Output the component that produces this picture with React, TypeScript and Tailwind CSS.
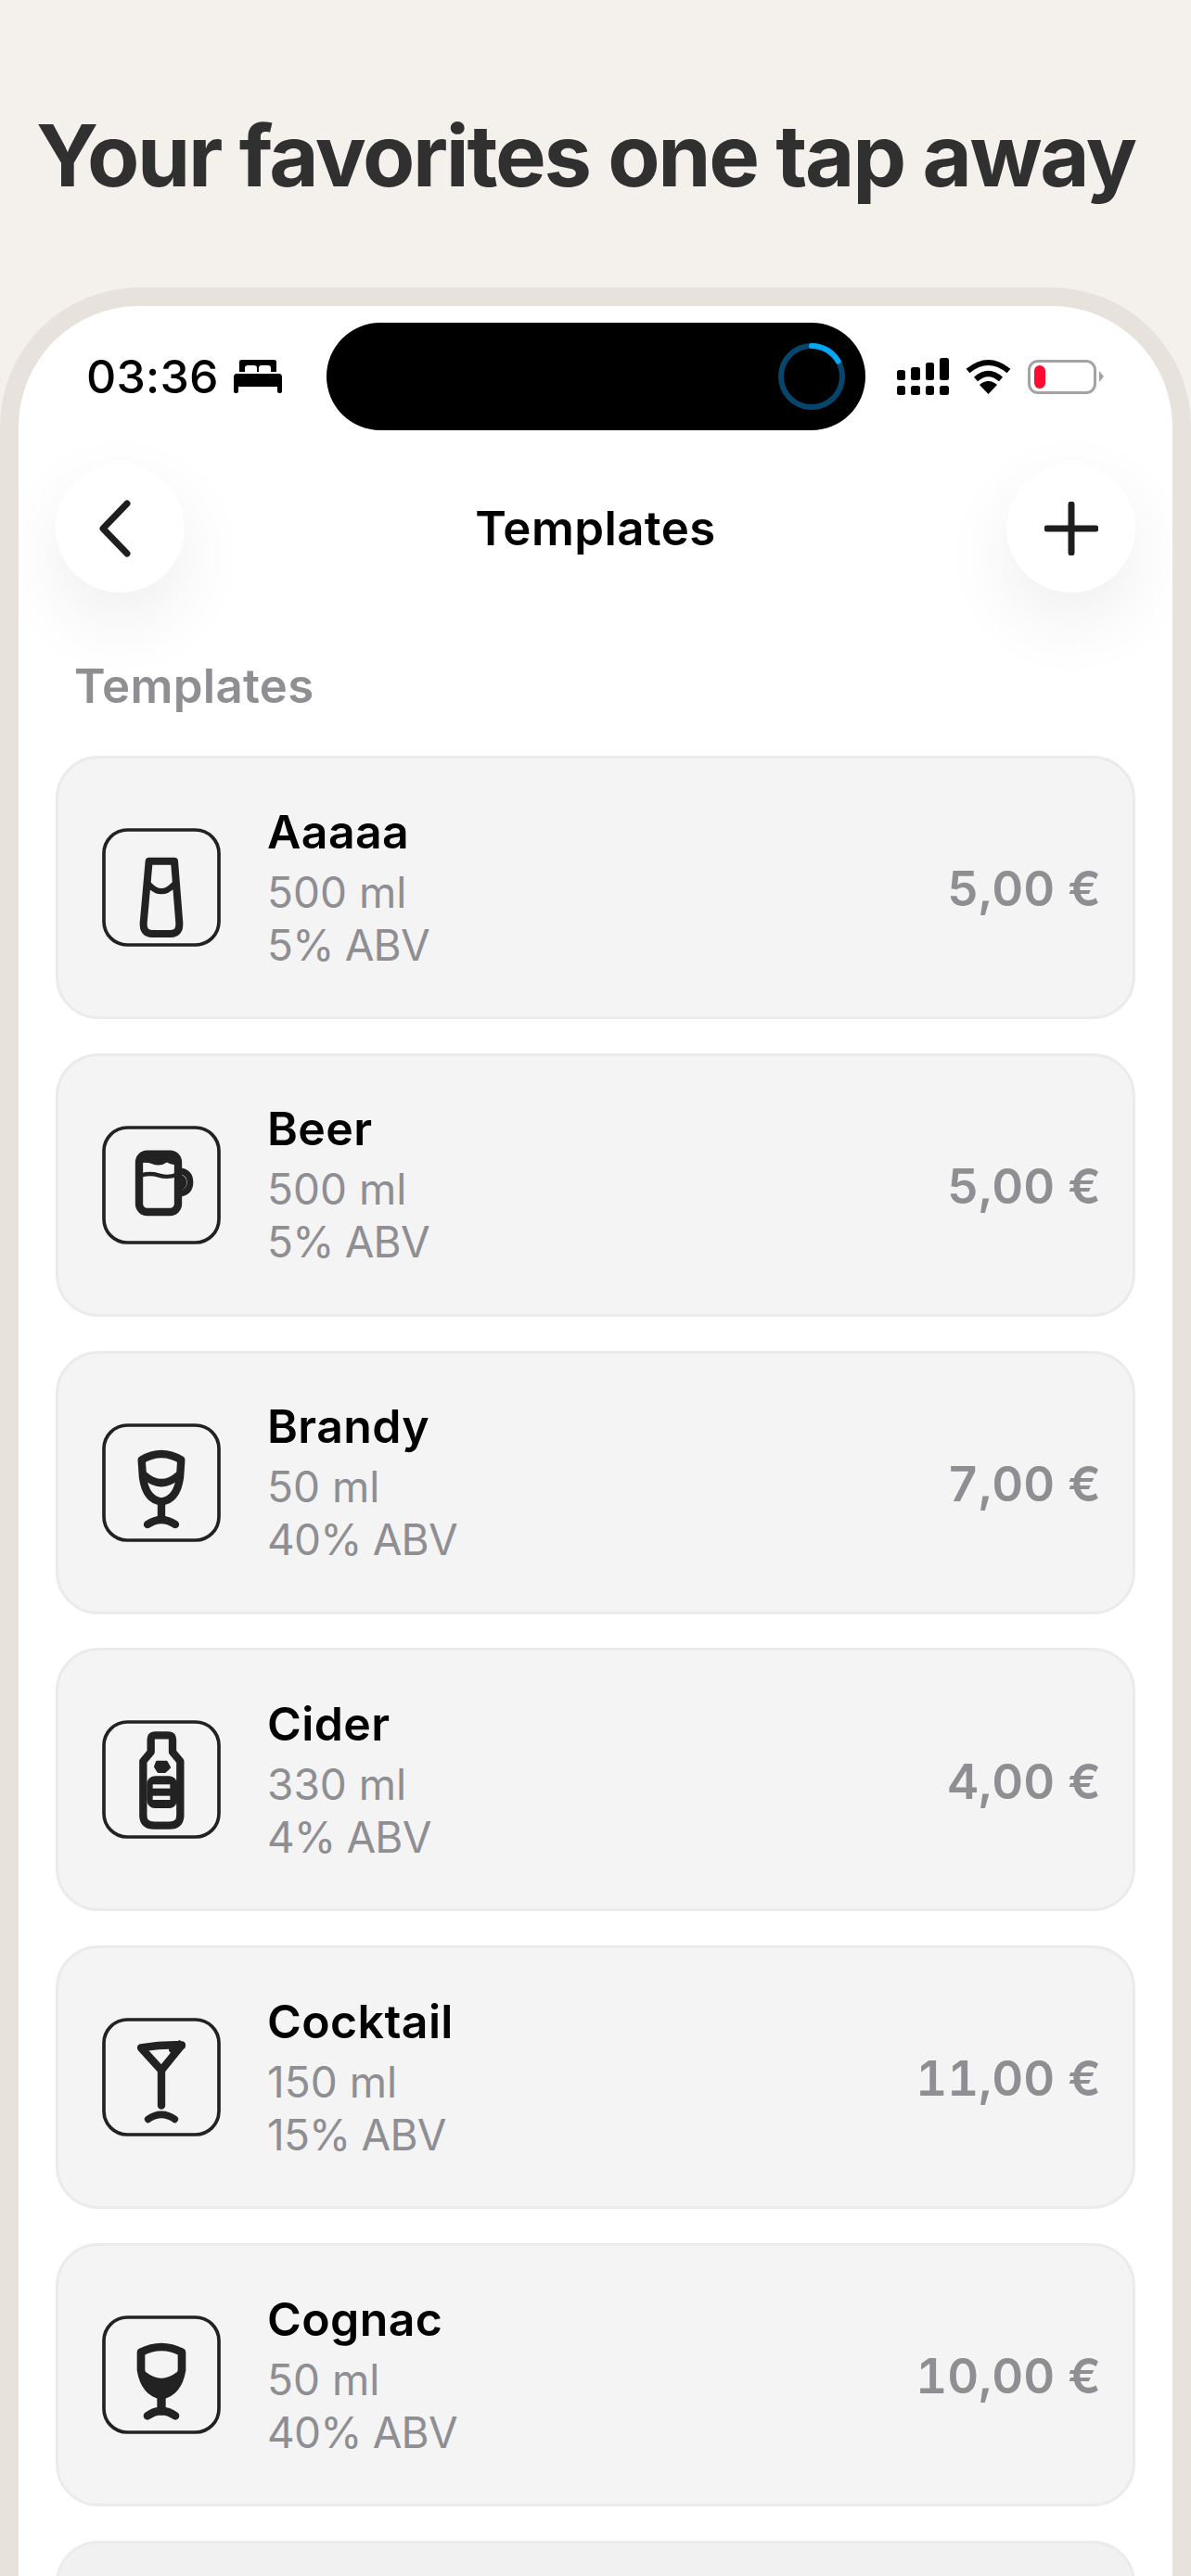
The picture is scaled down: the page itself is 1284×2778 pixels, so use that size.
const INK = "#222222";
const CARD = "#f4f4f4";

function Box({ minY, children }: { minY: number; children: React.ReactNode }) {
  return (
    <svg width="128" height="128" viewBox={`58 ${minY} 384 384`} className="shrink-0" fill="none" stroke={INK} strokeLinecap="round" strokeLinejoin="round">
      <rect x={64} y={minY + 6} width={372} height={372} rx={76} strokeWidth={11} />
      {children}
    </svg>
  );
}

const Glass = () => (
  <Box minY={68}>
    <path d="M210 175 L292 175 L308 375 Q310 410 280 410 L220 410 Q190 410 192 375 Z" strokeWidth={24} />
    <path d="M212 253 Q250 292 288 253" strokeWidth={19} />
  </Box>
);

const Beer = () => (
  <Box minY={72}>
    <rect x={178} y={164} width={126} height={187} rx={26} strokeWidth={25} />
    <path d="M178 192 Q178 164 204 164 L278 164 Q304 164 304 192 Q290 202 268 188 Q245 204 222 194 Q200 186 178 192 Z" fill={INK} strokeWidth={4} />
    <path d="M185 232 Q215 224 240 232 Q270 242 300 230" strokeWidth={13} />
    <path d="M308 218 Q343 222 343 255 Q343 287 308 292" strokeWidth={20} />
    <path d="M306 230 Q330 236 330 255 Q330 276 306 282" fill={INK} strokeWidth={4} />
  </Box>
);

const Brandy = () => (
  <Box minY={75}>
    <path d="M186 193 Q250 155 314 193 L310 250 Q300 322 250 328 Q200 322 190 250 Z" strokeWidth={25} />
    <path d="M195 243 Q250 292 305 243" strokeWidth={25} />
    <path d="M250 330 L250 385" strokeWidth={25} />
    <path d="M205 402 Q250 372 295 402" strokeWidth={25} />
  </Box>
);

const Bottle = () => (
  <Box minY={47}>
    <path d="M228 96 L274 96 Q286 96 286 110 L286 150 L311 180 L311 355 Q311 388 275 388 L227 388 Q191 388 191 355 L191 180 L216 150 L216 110 Q216 96 228 96 Z" strokeWidth={25} />
    <path d="M236 182 L266 182 L276 200 L262 214 L240 214 L230 198 Z" fill={INK} strokeWidth={8} />
    <rect x={205} y={230} width={94} height={100} rx={24} fill={INK} strokeWidth={4} />
    <rect x={222} y={255} width={56} height={13} fill={CARD} stroke="none" />
    <rect x={222} y={292} width={56} height={13} fill={CARD} stroke="none" />
  </Box>
);

const Cocktail = () => (
  <Box minY={50}>
    <path d="M184 147 Q250 136 316 138 L250 220 Z" strokeWidth={25} />
    <path d="M276 136 L310 122 L328 146 L290 178 L274 156 Z" fill={INK} stroke="none" />
    <path d="M250 220 L250 334" strokeWidth={25} />
    <path d="M207 378 Q250 348 293 378" strokeWidth={23} />
  </Box>
);

const Cognac = () => (
  <Box minY={53}>
    <path d="M184 172 Q250 138 316 172 L316 230 Q304 300 250 312 Q196 300 184 230 Z" strokeWidth={26} />
    <path d="M198 240 Q250 280 302 240 L290 300 L250 322 L210 300 Z" fill={INK} strokeWidth={8} />
    <path d="M250 320 L250 362" strokeWidth={28} />
    <path d="M205 378 Q250 346 295 378" strokeWidth={26} />
  </Box>
);

const items = [
  { name: "Aaaaa", vol: "500 ml", abv: "5% ABV", price: "5,00 €", Icon: Glass },
  { name: "Beer", vol: "500 ml", abv: "5% ABV", price: "5,00 €", Icon: Beer },
  { name: "Brandy", vol: "50 ml", abv: "40% ABV", price: "7,00 €", Icon: Brandy },
  { name: "Cider", vol: "330 ml", abv: "4% ABV", price: "4,00 €", Icon: Bottle },
  { name: "Cocktail", vol: "150 ml", abv: "15% ABV", price: "11,00 €", Icon: Cocktail },
  { name: "Cognac", vol: "50 ml", abv: "40% ABV", price: "10,00 €", Icon: Cognac },
];

function Card({ name, vol, abv, price, Icon }: (typeof items)[number]) {
  return (
    <div className="flex h-[284px] shrink-0 items-center rounded-[46px] border-[3px] border-[#ebebec] bg-[#f4f4f4] pl-[47px] pr-[34px]">
      <Icon />
      <div className="ml-[50px] flex flex-col">
        <span className="text-[50px] leading-[60px] font-semibold tracking-[0.4px] text-black">{name}</span>
        <span className="mt-[7px] text-[46px] leading-[57px] text-[#8e8e93]">{vol}</span>
        <span className="text-[46px] leading-[57px] tracking-[-0.8px] text-[#8e8e93]">{abv}</span>
      </div>
      <span className="ml-auto pt-[3px] text-[52.5px] font-semibold tabular-nums text-[#8e8e93]">{price}</span>
    </div>
  );
}

function Bed() {
  return (
    <svg width="52" height="36" viewBox="0 0 52 36" fill="#000">
      <path d="M6 2 Q6 0 9 0 L43 0 Q46 0 46 2 L46 13 L40 13 L40 9 Q40 6 37 6 L30 6 Q27 6 27 9 L27 13 L25 13 L25 9 Q25 6 22 6 L15 6 Q12 6 12 9 L12 13 L6 13 Z" />
      <path d="M3 15 L49 15 Q52 15 52 19 L52 34 Q52 36 49 36 Q47 36 47 34 L47 29 L5 29 L5 34 Q5 36 3 36 Q0 36 0 34 L0 19 Q0 15 3 15 Z" />
    </svg>
  );
}

function Signal() {
  return (
    <svg width="56" height="40" viewBox="0 0 56 40" fill="#000">
      <rect x="0" y="13" width="9" height="11" rx="2.5" />
      <rect x="15" y="10" width="10" height="14" rx="2.5" />
      <rect x="31" y="5" width="9" height="19" rx="2.5" />
      <rect x="46" y="0" width="10" height="24" rx="2.5" />
      <rect x="0" y="30" width="9" height="10" rx="2.5" />
      <rect x="15" y="30" width="10" height="10" rx="2.5" />
      <rect x="31" y="30" width="9" height="10" rx="2.5" />
      <rect x="46" y="30" width="10" height="10" rx="2.5" />
    </svg>
  );
}

function Wifi() {
  return (
    <svg width="49" height="38" viewBox="0 0 49 38" fill="none" stroke="#000" strokeWidth="6">
      <path d="M2.5 13 Q24.5 -5 46.5 13" />
      <path d="M11 22 Q24.5 10 38 22" />
      <path d="M24.5 38 L15 28 Q24.5 20 34 28 Z" fill="#000" stroke="none" />
    </svg>
  );
}

function Ring() {
  return (
    <svg width="72" height="72" viewBox="0 0 72 72" fill="none" strokeWidth="6">
      <circle cx="36" cy="36" r="33" stroke="#06466d" />
      <path d="M36 3 A33 33 0 0 1 64.6 19.5" stroke="#00a7f5" strokeLinecap="round" />
    </svg>
  );
}

export default function App() {
  return (
    <div className="flex h-[2778px] w-[1284px] flex-col overflow-hidden bg-[#f4f1ec] font-['Inter',sans-serif]">
      <h1 className="mt-[112px] h-[198px] pl-[39px] text-[92px] leading-[112px] font-bold tracking-[-2.3px] whitespace-nowrap text-[#303030]">
        Your favorites one tap away
      </h1>
      <div className="flex min-h-0 flex-1 flex-col overflow-hidden rounded-t-[150px] border-x-[20px] border-t-[20px] border-[#e8e2dc] bg-white">
        <div className="mt-[18px] flex h-[116px] shrink-0 items-center">
          <div className="flex w-[332px] items-center gap-[16px] pl-[73px] text-black">
            <span className="text-[50px] leading-none font-medium tracking-[0.2px]">03:36</span>
            <Bed />
          </div>
          <div className="flex h-[116px] w-[581px] items-center justify-end rounded-[58px] bg-black pr-[22px]">
            <Ring />
          </div>
          <div className="ml-[34px] flex items-center gap-[18px]">
            <Signal />
            <Wifi />
            <div className="flex items-center gap-[3px]">
              <div className="flex h-[37px] w-[74px] items-center rounded-[11px] border-[3px] border-[#a3a3a3] bg-white pl-[4px]">
                <div className="h-[25px] w-[12px] rounded-[6px] bg-[#ff0a30]" />
              </div>
              <svg width="5" height="12" viewBox="0 0 5 12" fill="#a3a3a3"><path d="M0 0 L5 6 L0 12 Z" /></svg>
            </div>
          </div>
        </div>

        <div className="mt-[36px] flex shrink-0 items-center justify-between px-[40px]">
          <button className="flex h-[139px] w-[139px] items-center justify-center rounded-full bg-white shadow-[0_30px_80px_rgba(0,0,0,0.07)]">
            <svg width="44" height="62" viewBox="0 0 44 62" fill="none" stroke="#1e1e1e" strokeWidth="7" strokeLinecap="round" strokeLinejoin="round" className="overflow-visible">
              <path d="M29 4 L3 31 L29 58" />
            </svg>
          </button>
          <span className="text-[51px] leading-none font-semibold tracking-[0.4px] text-black">Templates</span>
          <button className="flex h-[139px] w-[139px] items-center justify-center rounded-full bg-white shadow-[0_30px_80px_rgba(0,0,0,0.07)]">
            <svg width="58" height="58" viewBox="0 0 58 58" fill="none" stroke="#1e1e1e" strokeWidth="7" strokeLinecap="round">
              <path d="M29 3 L29 55 M3 29 L55 29" />
            </svg>
          </button>
        </div>

        <div className="mt-[71px] shrink-0 pl-[60px] text-[51px] leading-[60px] font-semibold tracking-[0.3px] text-[#8e8e93]">Templates</div>

        <div className="mt-[45px] flex flex-col gap-[36.83px] px-[40px]">
          {items.map((it) => (
            <Card key={it.name} {...it} />
          ))}
          <div className="h-[284px] shrink-0 rounded-[46px] border-[3px] border-[#ebebec] bg-[#f1f1f2]" />
        </div>
      </div>
    </div>
  );
}
